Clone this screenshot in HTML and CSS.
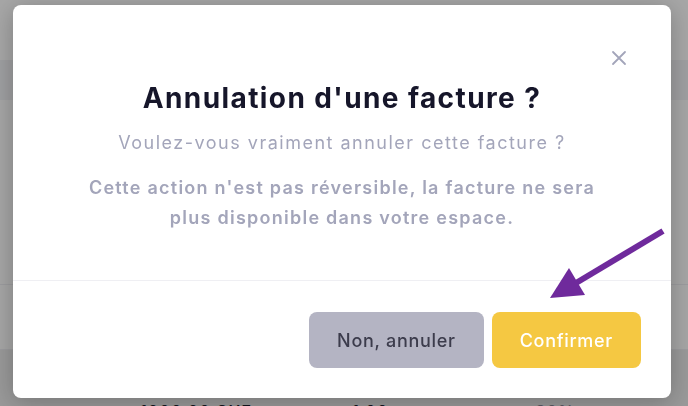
FILE: index.html
```html
<!DOCTYPE html>
<html lang="fr">
<head>
<meta charset="utf-8">
<title>Annulation d'une facture</title>
<link rel="stylesheet" href="styles.css">
</head>
<body>
<div class="page">
  <div class="page-top"></div>
  <div class="table-head"></div>
  <div class="table-row tall"></div>
  <div class="table-row"></div>
  <div class="table-row last">
    <span class="cell amount">1000,00 CHF</span>
    <span class="cell qty">1,00</span>
    <span class="cell tax">20%</span>
  </div>
</div>

<div class="overlay">
  <div class="modal" role="dialog" aria-labelledby="modal-title">
    <button class="close" aria-label="Fermer">
      <svg width="16" height="16" viewBox="0 0 16 16"><path d="M2 2 L14 14 M14 2 L2 14" stroke="#a3a5ba" stroke-width="1.8" stroke-linecap="round" fill="none"/></svg>
    </button>
    <div class="modal-body">
      <h2 id="modal-title" class="title">Annulation d'une facture ?</h2>
      <p class="subtitle">Voulez-vous vraiment annuler cette facture ?</p>
      <p class="warning">Cette action n'est pas réversible, la facture ne sera<br>plus disponible dans votre espace.</p>
    </div>
    <div class="modal-footer">
      <button class="btn btn-cancel">Non, annuler</button>
      <button class="btn btn-confirm">Confirmer</button>
    </div>
  </div>
</div>

<svg class="annotation" width="688" height="406" viewBox="0 0 688 406">
  <line x1="663" y1="231" x2="576" y2="283" stroke="#6f2a9c" stroke-width="6"/>
  <polygon points="550,298 569,268 585,295" fill="#6f2a9c"/>
</svg>
</body>
</html>
```

FILE: styles.css
```css
html, body {
  margin: 0;
  padding: 0;
  width: 688px;
  height: 406px;
  overflow: hidden;
}

body {
  font-family: "Inter", "Noto Sans", sans-serif;
  background: #ffffff;
}

.page {
  display: flex;
  flex-direction: column;
}

.page-top {
  height: 60px;
  background: #ffffff;
}

.table-head {
  height: 40px;
  background: #f3f4f7;
}

.table-row {
  height: 64px;
  border-bottom: 1px solid #eeeef2;
  background: #fdfdfd;
}

.table-row.tall {
  height: 184px;
}

.table-row.last {
  height: 60px;
  background: #ebebeb;
  border-bottom: none;
  display: flex;
  align-items: flex-end;
  font-size: 16px;
  font-weight: 600;
  letter-spacing: 1px;
  color: #1d1d2c;
  line-height: 1;
}

.cell {
  position: relative;
  top: 9px;
}

.amount { margin-left: 140px; }
.qty { margin-left: 100px; }
.tax { margin-left: 147px; color: #8a8a96; }

.overlay {
  position: fixed;
  inset: 0;
  background: rgba(0, 0, 0, 0.35);
  padding: 5px 0 0 13px;
  box-sizing: border-box;
}

.modal {
  position: relative;
  width: 658px;
  height: 393px;
  background: #ffffff;
  border-radius: 8px;
  box-shadow: 0 4px 24px rgba(0, 0, 0, 0.25);
  display: flex;
  flex-direction: column;
  box-sizing: border-box;
}

.close {
  position: absolute;
  top: 45px;
  left: 598px;
  width: 16px;
  height: 16px;
  padding: 0;
  border: none;
  background: none;
  display: flex;
}

.modal-body {
  height: 276px;
  box-sizing: border-box;
  padding-top: 75px;
  border-bottom: 1px solid #efeff3;
  text-align: center;
}

.title {
  margin: 0;
  font-size: 28px;
  line-height: 36px;
  font-weight: 700;
  letter-spacing: 1.4px;
  color: #16162a;
}

.subtitle {
  margin: 14px 0 0;
  font-size: 18px;
  line-height: 26px;
  font-weight: 400;
  letter-spacing: 1.5px;
  color: #a3a5ba;
}

.warning {
  margin: 17px 0 0;
  font-size: 18px;
  line-height: 30px;
  font-weight: 600;
  letter-spacing: 1.25px;
  color: #a3a5ba;
}

.modal-footer {
  flex: 1;
  display: flex;
  justify-content: flex-end;
  align-items: flex-start;
  gap: 8px;
  padding: 31px 30px 0 0;
}

.btn {
  height: 56px;
  padding: 0 28px;
  border: none;
  border-radius: 8px;
  font-family: inherit;
  font-size: 18px;
  font-weight: 500;
  letter-spacing: 0.7px;
}

.btn-cancel {
  background: #b4b4c3;
  color: #3c3c4c;
}

.btn-confirm {
  background: #f5c842;
  color: #ffffff;
}

.annotation {
  position: fixed;
  top: 0;
  left: 0;
  pointer-events: none;
}
```
